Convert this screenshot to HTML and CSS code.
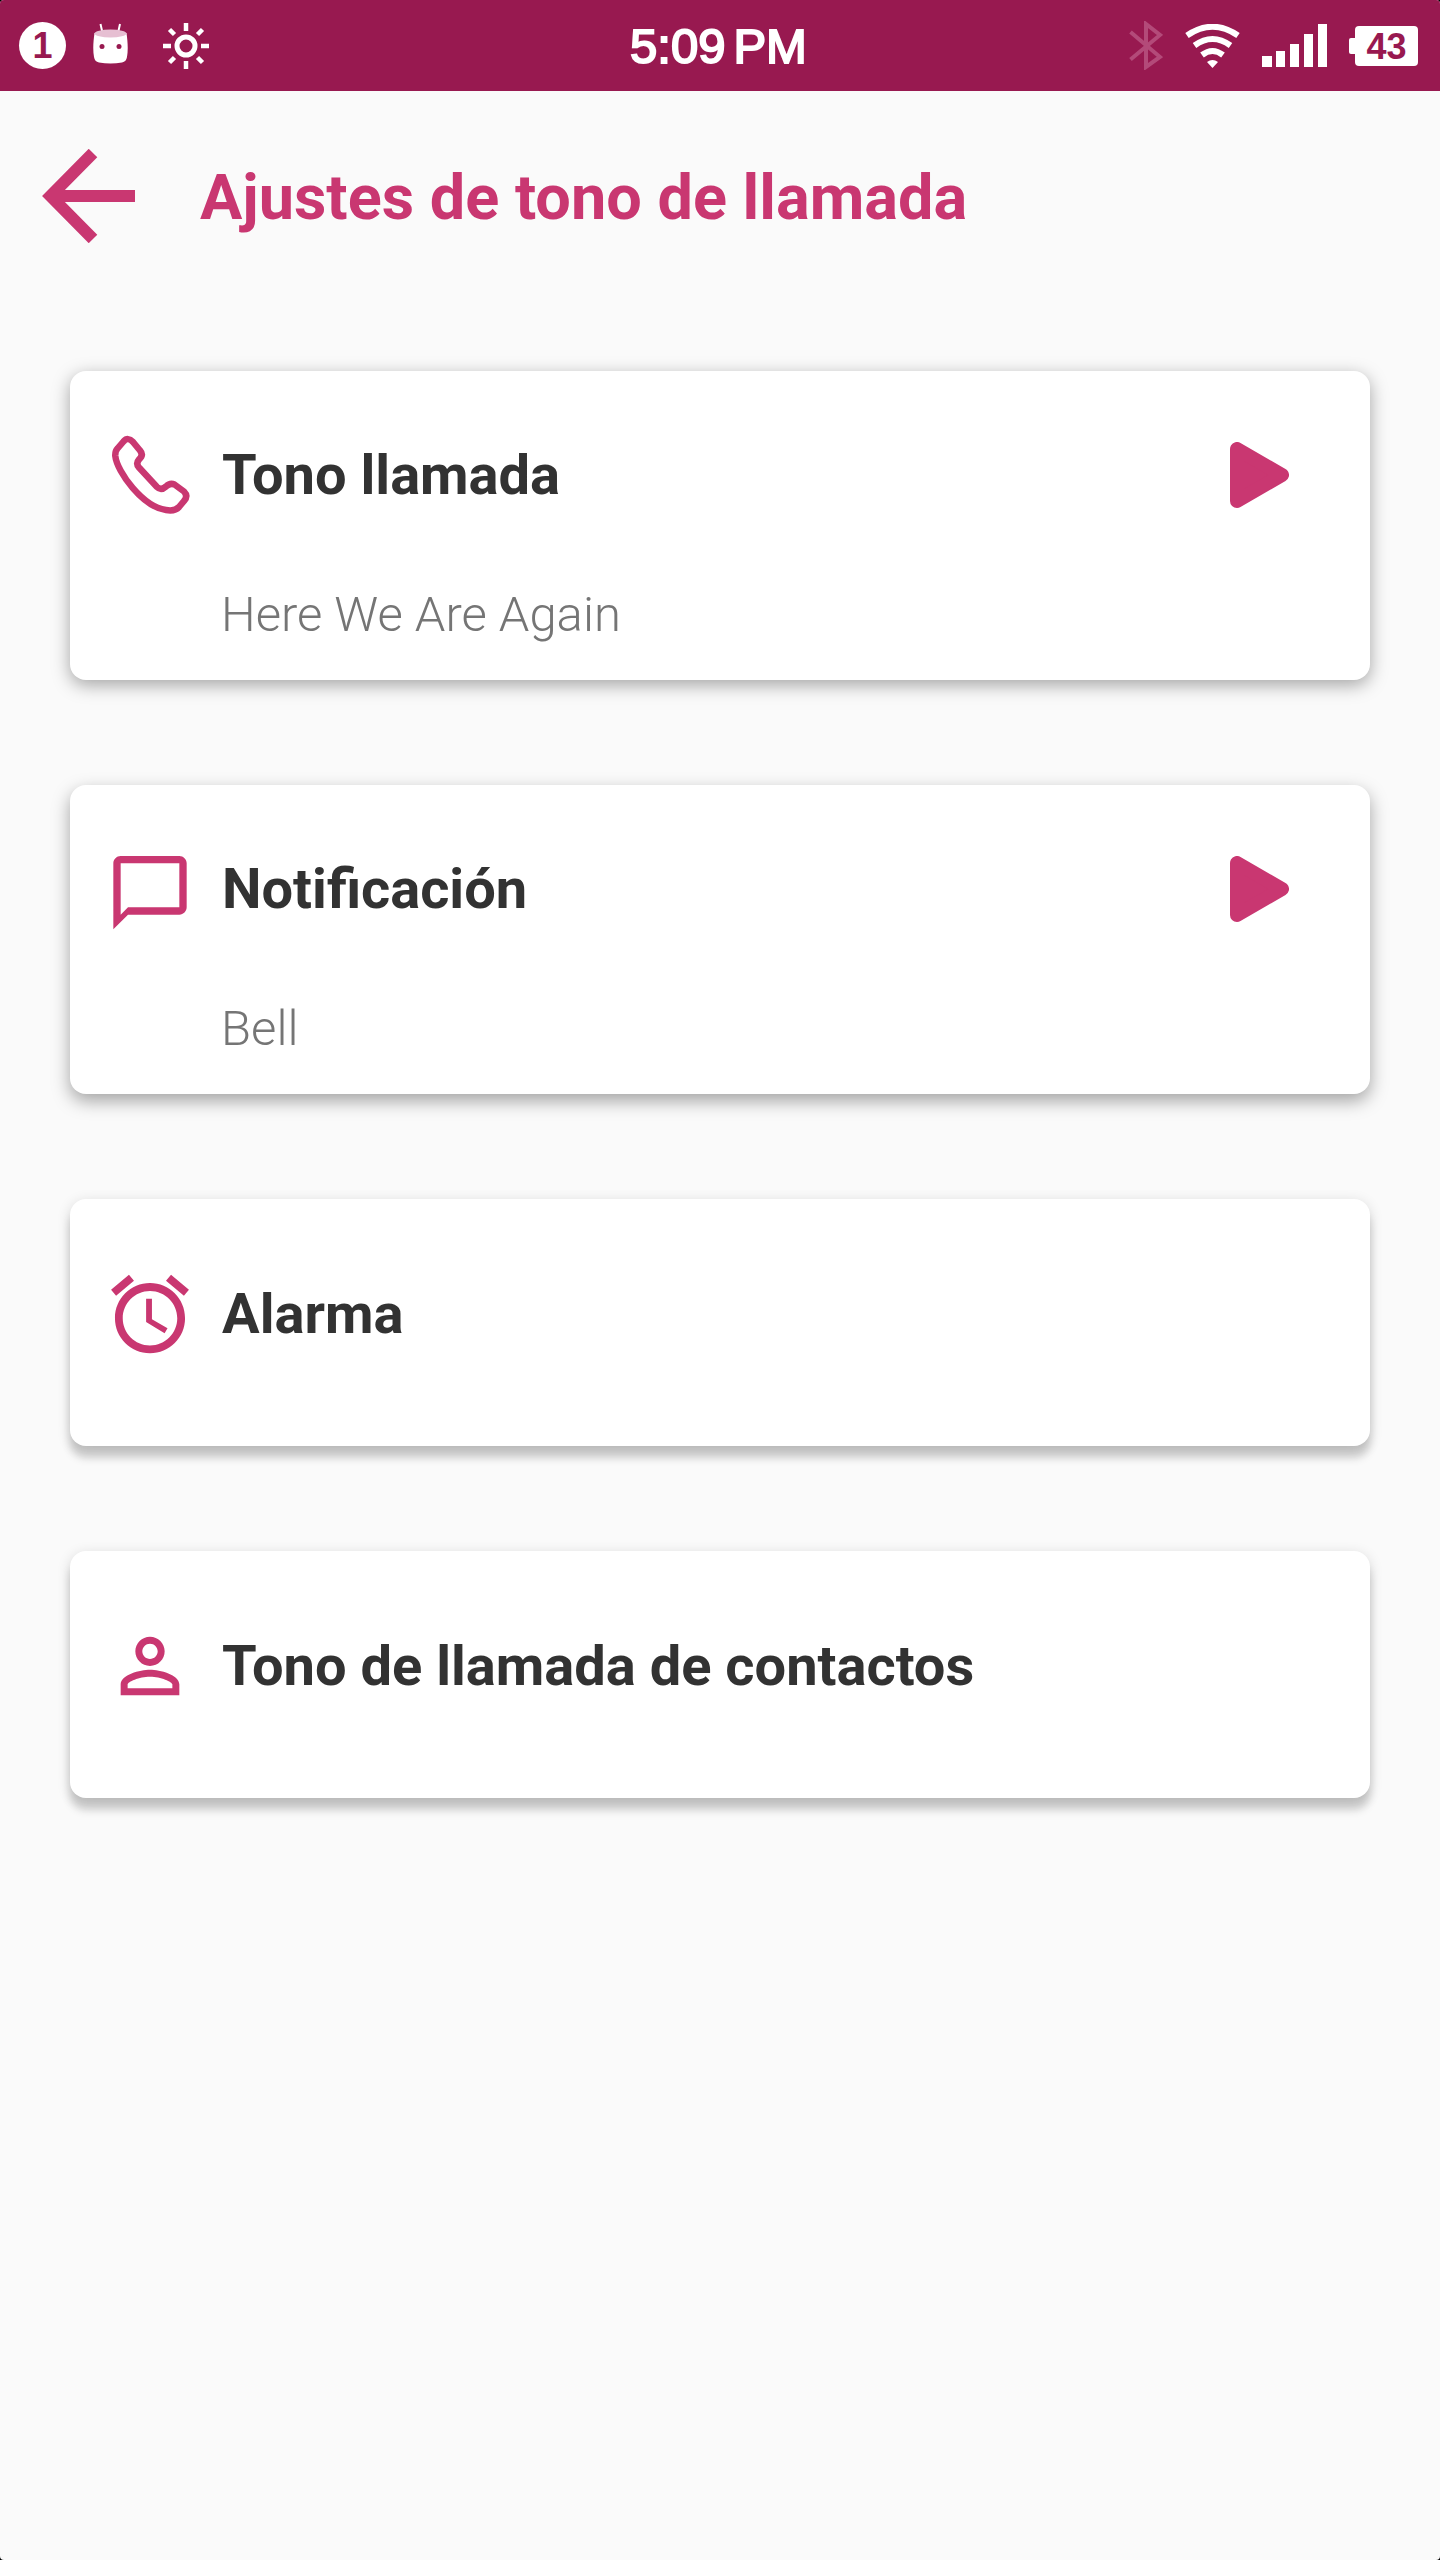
FILE: index.html
```html
<!DOCTYPE html>
<html lang="es">
<head>
<meta charset="utf-8">
<meta name="viewport" content="width=device-width, initial-scale=1">
<title>Ajustes de tono de llamada</title>
<link rel="stylesheet" href="styles.css">
</head>
<body>
<div class="screen">
  <div class="status">
    <div class="status-left">
      <span class="count">1</span>
      <svg class="droid" width="35" height="41" viewBox="0 0 35 41" aria-hidden="true">
        <path d="M7.500 1L9.500 10M27 1L25 10" fill="none" stroke="#fff" stroke-width="2"/>
        <path d="M1.500 10C.3 18-.3 27 1 34c.5 3 2 5 5 5.500 7.500 1.300 15.500 1.300 23 0 3-.5 4.500-2.500 5-5.500 1.300-7 .7-16-.5-24z" fill="#fff"/>
        <ellipse cx="17.500" cy="10.500" rx="16" ry="4" fill="#e6bfd2"/>
        <circle cx="9" cy="23.500" r="2.500" fill="#981950"/><circle cx="26" cy="23.500" r="2.500" fill="#981950"/>
      </svg>
      <svg class="sun" width="46" height="46" viewBox="-23 -23 46 46" fill="none" stroke="#fff" aria-hidden="true">
        <circle r="9" stroke-width="5"/>
        <path d="M0-23v8M0 15v8M-23 0h8M15 0h8M-16.500-16.500l5 5M16.500-16.500l-5 5M-16.500 16.500l5-5M16.500 16.500l-5-5" stroke-width="4.500"/>
      </svg>
    </div>
    <div class="clock"><span>5:09</span><span>PM</span></div>
    <div class="status-right">
      <svg width="34" height="49" viewBox="0 0 34 49" fill="none" stroke="#b34a79" stroke-width="4" aria-hidden="true">
        <path d="M1.500 11L31 36 17 46V3l14 11L1.500 38.500"/>
      </svg>
      <svg width="55" height="44" viewBox="0 0 55 44" fill="none" stroke="#fff" aria-hidden="true">
        <path d="M2 11.500Q27.500-6 53 11.500" stroke-width="6"/>
        <path d="M9.500 21.500Q27.500 8.500 45.500 21.500" stroke-width="6"/>
        <path d="M17 31Q27.500 23 38 31" stroke-width="6"/>
        <path d="M22 38q5.500-4 11 0l-5.500 6z" fill="#fff" stroke="none"/>
      </svg>
      <svg width="65" height="43" viewBox="0 0 65 43" fill="#fff" aria-hidden="true">
        <path d="M0 32h10v11H0zM14 27h9v16h-9zM28 20h9v23h-9zM42 10h9v33h-9zM56 0h9v43h-9z"/>
      </svg>
      <span class="battery">43</span>
    </div>
  </div>

  <header class="header">
    <button class="back" type="button" aria-label="Atrás">
      <svg width="94" height="94" viewBox="0 0 94 94" fill="none" stroke="currentColor" stroke-width="12" aria-hidden="true">
        <path d="M51 4L8.500 47 51 90M10 47h83"/>
      </svg>
    </button>
    <h1 class="heading">Ajustes de tono de llamada</h1>
  </header>

  <main class="cards">
    <section class="card">
      <div class="row">
        <svg class="icon" viewBox="0 0 88 88" fill="none" stroke="currentColor" stroke-width="6.500" stroke-linejoin="round" aria-hidden="true">
          <path d="M17.500 10.500L11.500 17.500Q9 20 9.300 25C11 41 37 76 60 79Q69 80.500 73 76L78 70Q82.500 65 78 60.500L68.500 53.500Q64 51.500 60 55.500 55 60 51 56L33 36.500Q29.500 32.500 33 28.500 38 24 34 19.500L27 11Q22 5.500 17.500 10.500Z"/>
        </svg>
        <h2 class="name">Tono llamada</h2>
        <button class="play" type="button" aria-label="Reproducir tono de llamada">
          <svg width="59" height="66" viewBox="0 0 59 66" aria-hidden="true"><path d="M7 7v52l45-26z" fill="currentColor" stroke="currentColor" stroke-width="14" stroke-linejoin="round"/></svg>
        </button>
      </div>
      <p class="value">Here We Are Again</p>
    </section>

    <section class="card">
      <div class="row">
        <svg class="icon" viewBox="0 -1 24 24" fill="currentColor" aria-hidden="true">
          <path d="M20 2H4c-1.100 0-2 .9-2 2v18l4-4h14c1.100 0 2-.9 2-2V4c0-1.100-.9-2-2-2zm0 14H6l-2 2V4h16v12z"/>
        </svg>
        <h2 class="name">Notificación</h2>
        <button class="play" type="button" aria-label="Reproducir notificación">
          <svg width="59" height="66" viewBox="0 0 59 66" aria-hidden="true"><path d="M7 7v52l45-26z" fill="currentColor" stroke="currentColor" stroke-width="14" stroke-linejoin="round"/></svg>
        </button>
      </div>
      <p class="value">Bell</p>
    </section>

    <section class="card single">
      <div class="row">
        <svg class="icon" viewBox="0.700 0.630 22.600 22.600" fill="currentColor" aria-hidden="true">
          <path d="M22 5.720l-4.600-3.860-1.290 1.530 4.600 3.860L22 5.720zM7.880 3.390L6.600 1.860 2 5.710l1.290 1.530 4.590-3.850zM12.500 8H11v6l4.750 2.850.75-1.230-4-2.370V8zM12 4c-4.970 0-9 4.030-9 9s4.020 9 9 9c4.970 0 9-4.030 9-9s-4.030-9-9-9zm0 16c-3.870 0-7-3.130-7-7s3.130-7 7-7 7 3.130 7 7-3.130 7-7 7z"/>
        </svg>
        <h2 class="name">Alarma</h2>
      </div>
    </section>

    <section class="card single">
      <div class="row">
        <svg class="icon" viewBox="0 0 24 24" fill="currentColor" aria-hidden="true">
          <path d="M12 5.900c1.160 0 2.100.94 2.100 2.100s-.94 2.100-2.100 2.100S9.900 9.160 9.900 8s.94-2.100 2.100-2.100m0 9c2.970 0 6.100 1.460 6.100 2.100v1.100H5.900V17c0-.64 3.130-2.100 6.100-2.100M12 4C9.790 4 8 5.790 8 8s1.790 4 4 4 4-1.790 4-4-1.790-4-4-4zm0 9c-2.670 0-8 1.340-8 4v3h16v-3c0-2.660-5.330-4-8-4z"/>
        </svg>
        <h2 class="name">Tono de llamada de contactos</h2>
      </div>
    </section>
  </main>
</div>
</body>
</html>
```
FILE: styles.css
```css
* { box-sizing: border-box; }

html { background: #000; }

body {
  margin: 0;
  font-family: Roboto, sans-serif;
  color: #323232;
}

h1, h2, p { margin: 0; }

svg { display: block; flex: none; }

button {
  padding: 0;
  border: 0;
  background: none;
  color: inherit;
  cursor: pointer;
}

.screen {
  min-height: 100vh;
  background: #fafafa;
  border-radius: 4px;
  overflow: hidden;
}

/* Status bar */
.status {
  display: grid;
  grid-template-columns: 1fr auto 1fr;
  align-items: center;
  height: 91px;
  padding: 0 22px 0 19px;
  background: #981950;
  color: #fff;
  font-family: "Liberation Sans", Arial, sans-serif;
}

.status-left, .status-right { display: flex; align-items: center; }
.status-right { justify-content: flex-end; gap: 22px; }

.count {
  width: 47px;
  height: 47px;
  border-radius: 50%;
  background: #fff;
  color: #981950;
  font-size: 36px;
  font-weight: 700;
  line-height: 47px;
  text-align: center;
}

.droid { margin: 0 35px 4px 27px; }

.clock {
  display: flex;
  gap: 8px;
  font-size: 49px;
  line-height: 56px;
  -webkit-text-stroke: 2px #fff;
}

.battery {
  position: relative;
  width: 63px;
  height: 40px;
  margin-left: 6px;
  border-radius: 4px;
  background: #fff;
  color: #981950;
  font-size: 36px;
  font-weight: 700;
  line-height: 42px;
  text-align: center;
}

.battery::before {
  content: "";
  position: absolute;
  left: -6px;
  top: 12px;
  width: 8px;
  height: 16px;
  border-radius: 2px;
  background: #fff;
}

/* Title bar */
.header {
  display: flex;
  align-items: flex-start;
  gap: 64px;
  padding: 58px 42px 0;
  color: #c93771;
}

.heading {
  font-size: 63px;
  font-weight: 700;
  line-height: 98px;
}

/* Ringtone cards */
.cards {
  display: grid;
  gap: 105px;
  padding: 124px 70px;
}

.card {
  padding: 60px 81px 32px 36px;
  border-radius: 16px;
  background: #fff;
  box-shadow: 0 5px 18px rgba(0, 0, 0, .35);
}

.card:nth-child(2) { box-shadow: 0 7px 18px rgba(0, 0, 0, .35); }

.card.single {
  padding-top: 71px;
  padding-bottom: 88px;
  box-shadow: 0 12px 8px rgba(0, 0, 0, .17), 0 3px 14px rgba(0, 0, 0, .14);
}

.row {
  display: flex;
  align-items: center;
  gap: 28px;
}

.icon {
  width: 88px;
  height: 88px;
  color: #c93771;
}

.name {
  flex: 1;
  font-size: 56px;
  font-weight: 700;
  line-height: 66px;
}

.play { color: #c93771; }

.value {
  margin: 63px 0 0 115px;
  color: #757575;
  font-size: 49px;
  font-weight: 300;
  line-height: 66px;
}
```
